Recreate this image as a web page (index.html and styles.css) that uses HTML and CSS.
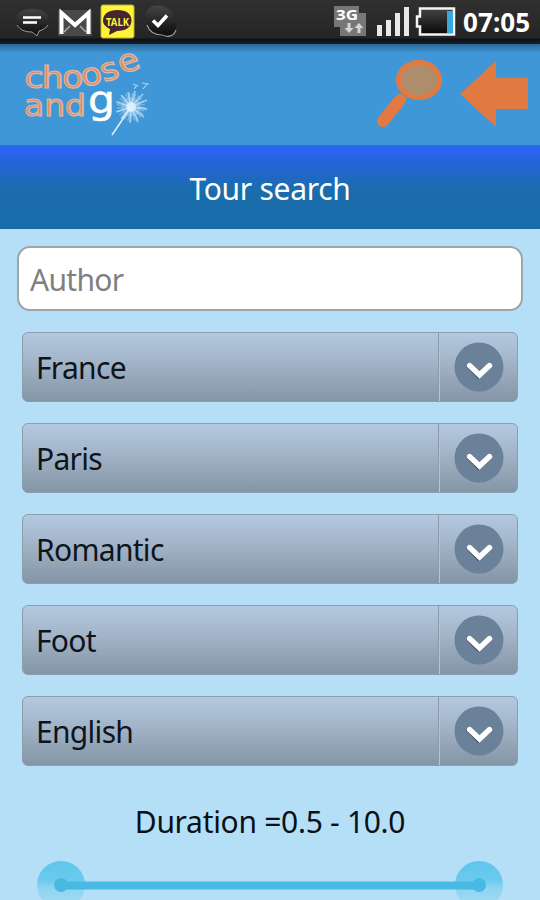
FILE: index.html
```html
<!DOCTYPE html>
<html lang="en">
  <head>
    <meta charset="UTF-8" />
    <meta name="viewport" content="width=device-width, initial-scale=1.0" />
    <title>Tour search</title>
    <link rel="stylesheet" href="styles.css">
  </head>
  <body>
    <div class="status">
      <svg class="status-left" width="180" height="44" viewBox="0 0 180 44">
        <defs>
          <linearGradient id="dark" x1="0" y1="0" x2="0" y2="1">
            <stop offset="0" stop-color="#444" />
            <stop offset="1" stop-color="#080808" />
          </linearGradient>
        </defs>
        <path d="M32 9c10 0 17 4 17 11 0 5-4 9-10 11l-2 6-5-5c-10 0-16-5-16-12s6-11 16-11z" fill="url(#dark)" />
        <path d="M17 25c3 5 8 7 15 7l5 4 2-5c4-1 7-3 9-6" fill="none" stroke="#999" stroke-width="1" />
        <path d="M23 17.500h18M23 22.500h14" stroke="#fff" stroke-width="2.600" />
        <rect x="58" y="10" width="34" height="26" fill="#494949" />
        <path d="M61.500 34V13L75 25l13.500-12v21" fill="none" stroke="#fff" stroke-width="4" />
        <path d="M64 32l6-6M86 32l-6-6" stroke="#aaa" stroke-width="1.500" />
        <rect x="101" y="5" width="33" height="33" rx="2" fill="#fff23a" stroke="#b9b143" />
        <path d="M117.500 10c9 0 14 4 14 10.500S126 31 117 31l-8 4 1-6c-4-2-7-4.500-7-8.500 0-6.500 6-10.500 14.500-10.500z" fill="#46252d" />
        <text class="talk" x="106" y="25.500" textLength="23" lengthAdjust="spacingAndGlyphs">TALK</text>
        <path d="M151 7c9-4 21 1 23 10 4 7 2 16-3 19-5 3-9 1-12 0-9-1-13-7-12-14-3-6-2-12 4-15z" fill="url(#dark)" />
        <path d="M147 25c2 6 7 10 15 10 6 3 12 1 14-5" fill="none" stroke="#999" stroke-width="1.200" />
        <path d="M153 20.500l5 5 9-10" fill="none" stroke="#fff" stroke-width="3.600" />
      </svg>
      <svg class="status-right" width="130" height="44" viewBox="330 0 130 44">
        <path d="M334 6h25v7h7v23h-26v-9h-6z" fill="#777" />
        <text class="net" x="336" y="20" textLength="22" lengthAdjust="spacingAndGlyphs">3G</text>
        <path d="M349 23v6M359 33v-6" stroke="#d5d5d5" stroke-width="3" />
        <path d="M344.500 28h9l-4.500 5zM354.500 28h9l-4.500-5z" fill="#d5d5d5" />
        <path d="M377 25h5v11h-5zM386 20h5v16h-5zM395 13h5v23h-5zM404 7h5v29h-5z" fill="#e8e8e8" />
        <path d="M420 8.500h34v26h-34v-8h-3v-10h3z" fill="url(#dark)" stroke="#f4f4f4" stroke-width="2.500" />
        <rect x="447" y="11" width="6" height="22" fill="#37a9df" />
      </svg>
      <span class="clock">07:05</span>
    </div>

    <header>
      <svg class="logo" width="140" height="101" viewBox="20 44 140 101">
        <g class="logo-word">
          <text class="logo-orange" transform="translate(24.500 88) scale(1.120 1)" x="0 15.500 34 52 71 87" y="0 0 0 -1.500 -6 -14" rotate="0 0 -2 -10 -18 -20">choose</text>
          <text class="logo-orange" x="24" y="116" textLength="62" lengthAdjust="spacingAndGlyphs">and</text>
          <text class="logo-g" x="88" y="113" textLength="27" lengthAdjust="spacingAndGlyphs">g</text>
        </g>
        <g stroke="#d9ecf8" fill="none">
          <path d="M131 107L112 135" stroke-width="1.600" />
          <path d="M131 107L135 91M131 107L143 94M131 107L147 100M131 107L147 109M131 107L144 117M131 107L138 122M131 107L130 123M131 107L121 119M131 107L116 112M131 107L116 102M131 107L121 95M131 107L128 92" stroke-width="1.800" opacity=".6" />
          <circle cx="131" cy="107" r="12" stroke-width="4" stroke-dasharray="1 2" opacity=".5" />
          <path d="M134 89l3-4M133 84l5 2M143 89l4-5M142 83l7 1" stroke-width="1.200" opacity=".7" />
        </g>
        <circle cx="131" cy="107" r="10" fill="#d8edf9" opacity=".4" />
        <circle cx="131" cy="107" r="5" fill="#eef8fd" opacity=".7" />
      </svg>
      <svg class="actions" width="160" height="101" viewBox="375 44 160 101">
        <path d="M400 100L383 121" stroke="#e07a41" stroke-width="12" stroke-linecap="round" />
        <ellipse cx="419" cy="80" rx="20.500" ry="17.500" fill="#ae8d6d" stroke="#e07a41" stroke-width="5" />
        <path d="M460 94L496 61v17h32v31h-32v18z" fill="#e07a41" />
      </svg>
    </header>

    <h1>Tour search</h1>

    <main>
      <input class="input" type="text" placeholder="Author" />
      <div class="selects">
        <div class="select">
          <span class="value">France</span>
          <span class="arrow"><svg width="50" height="50" viewBox="0 0 50 50"><use href="#chevron" /></svg></span>
        </div>
        <div class="select">
          <span class="value">Paris</span>
          <span class="arrow"><svg width="50" height="50" viewBox="0 0 50 50"><use href="#chevron" /></svg></span>
        </div>
        <div class="select">
          <span class="value">Romantic</span>
          <span class="arrow"><svg width="50" height="50" viewBox="0 0 50 50"><use href="#chevron" /></svg></span>
        </div>
        <div class="select">
          <span class="value">Foot</span>
          <span class="arrow"><svg width="50" height="50" viewBox="0 0 50 50"><use href="#chevron" /></svg></span>
        </div>
        <div class="select">
          <span class="value">English</span>
          <span class="arrow"><svg width="50" height="50" viewBox="0 0 50 50"><symbol id="chevron" viewBox="0 0 50 50"><circle cx="25" cy="25" r="24.500" fill="#6b8199" /><path d="M14.500 24l10 10 10-10" fill="none" stroke="#344759" stroke-width="4.500" stroke-linecap="round" /><path d="M15.500 23.500l10 9.500 10-9.500" fill="none" stroke="#fff" stroke-width="5.400" stroke-linecap="round" /></symbol><use href="#chevron" /></svg></span>
        </div>
      </div>
      <p class="duration">Duration =0.5 - 10.0</p>
      <svg class="slider" width="540" height="48" viewBox="0 0 540 48">
        <defs>
          <linearGradient id="knob" x1="0" y1="0" x2="0" y2="1">
            <stop offset="0" stop-color="#5fc6eb" />
            <stop offset=".4" stop-color="#69caee" />
            <stop offset=".55" stop-color="#8dd4f1" />
            <stop offset="1" stop-color="#a9dcf5" />
          </linearGradient>
        </defs>
        <circle cx="61" cy="24" r="24" fill="url(#knob)" />
        <circle cx="479" cy="24" r="24" fill="url(#knob)" />
        <circle cx="61" cy="24" r="7" fill="#48b9e2" />
        <circle cx="479" cy="24" r="7" fill="#48b9e2" />
        <path d="M61 24.500h418" stroke="#48b9e2" stroke-width="8" />
      </svg>
    </main>
  </body>
</html>
```

FILE: styles.css
```css
body {
  margin: 0;
  height: 900px;
  overflow: hidden;
  background-color: #b4dff7;
  font-family: "Noto Sans", "Open Sans", sans-serif;
}

.status {
  display: flex;
  align-items: center;
  height: 44px;
  background: linear-gradient(#303030, #252525 85%, #111 90%, #14222e);
}
.status-left {
  margin-right: 150px;
}
.clock {
  margin-left: 3px;
  color: #fff;
  font-size: 26px;
  font-weight: bold;
  letter-spacing: 0.1px;
}
.talk {
  fill: #fff23a;
  font-size: 11px;
  font-weight: bold;
}
.net {
  fill: #fff;
  font-size: 15px;
  font-weight: bold;
}

header {
  display: flex;
  justify-content: space-between;
  height: 101px;
  padding: 0 5px 0 20px;
  background: linear-gradient(#2b6795, #4097d8 9px);
}
.logo {
  overflow: visible;
}
.logo-word {
  font-family: "DejaVu Sans", sans-serif;
}
.logo-orange {
  fill: #df8a60;
  stroke: #dcb8a5;
  stroke-width: 1.2px;
  font-size: 31px;
}
.logo-g {
  fill: #fff;
  stroke: #fff;
  stroke-width: 0.5px;
  font-size: 38px;
}

h1 {
  height: 84px;
  margin: 0;
  background: linear-gradient(#2d64f8, #2563db 20%, #1a6daa 55%, #186ca9);
  color: #fff;
  font-size: 30px;
  font-weight: normal;
  line-height: 87px;
  letter-spacing: -0.3px;
  text-align: center;
}

main {
  padding-top: 17px;
}
.input {
  display: block;
  box-sizing: border-box;
  width: 506px;
  height: 65px;
  margin: 0 auto;
  padding: 2px 11px 0;
  border: 2px solid #9fa5a6;
  border-radius: 13px;
  background-color: #fff;
  font-family: inherit;
  font-size: 30px;
  letter-spacing: -0.7px;
}
.input::placeholder {
  color: #808080;
}

.selects {
  display: flex;
  flex-direction: column;
  gap: 21.1px;
  margin: 21px 22px 0;
}
.select {
  display: flex;
  box-sizing: border-box;
  height: 70px;
  border: 1px solid #8c9dad;
  border-radius: 6px;
  background: linear-gradient(#b3c9e0, #a2b3c7 45%, #8495a6);
}
.value {
  flex: 1;
  padding-left: 13px;
  color: #0c151c;
  font-size: 30px;
  line-height: 70px;
  letter-spacing: -0.7px;
}
.arrow {
  display: flex;
  align-items: center;
  justify-content: center;
  box-sizing: border-box;
  width: 79px;
  padding-left: 2px;
  border-left: 1px solid #8b9aa9;
  box-shadow: inset 1px 0 #b6c5d3;
}

.duration {
  margin: 34px 0 0;
  color: #0a1116;
  font-size: 30px;
  line-height: 44px;
  letter-spacing: -0.3px;
  text-align: center;
}
.slider {
  display: block;
  margin-top: 17px;
}
```
